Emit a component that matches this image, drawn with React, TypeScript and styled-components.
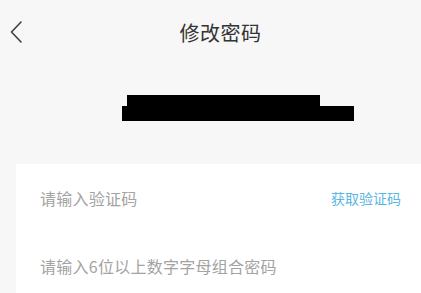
import styled, { createGlobalStyle } from "styled-components";

const GlobalStyle = createGlobalStyle`
    html, body {
        margin: 0;
        padding: 0;
        background: #f7f7f7;
        font-family: "Noto Sans CJK SC", "Noto Sans", sans-serif;
    }
`;

const Page = styled.div`
    width: 421px;
    min-height: 293px;
    overflow: hidden;
`;

const Header = styled.div`
    position: relative;
    height: 64px;
    display: flex;
    align-items: center;
    justify-content: center;
`;

const BackButton = styled.div`
    position: absolute;
    left: 10px;
    top: 21px;
    width: 12px;
    height: 22px;
    display: flex;
`;

const Title = styled.div`
    font-size: 20px;
    color: #333333;
    letter-spacing: 0.5px;
    margin-left: 20px;
`;

const Masked = styled.div`
    height: 100px;
    display: flex;
    flex-direction: column;
    padding-top: 31px;
    box-sizing: border-box;
`;

const MaskBar = styled.div<{ $left: number; $width: number; $height: number }>`
    margin-left: ${p => p.$left}px;
    width: ${p => p.$width}px;
    height: ${p => p.$height}px;
    background: #000;
`;

const Card = styled.div`
    margin-left: 16px;
    background: #ffffff;
`;

const Row = styled.div`
    height: 68px;
    display: flex;
    align-items: center;
    justify-content: space-between;
    padding: 0 20px 0 24px;
`;

const Placeholder = styled.span`
    font-size: 16px;
    letter-spacing: 0.25px;
    color: #a3a3a3;
`;

const CodeLink = styled.span`
    font-size: 14px;
    color: #5ab6e2;
    margin-top: -1px;
`;

export default function App() {
    return (
        <Page>
            <GlobalStyle />
            <Header>
                <BackButton>
                    <svg width="12" height="22" viewBox="0 0 12 22" fill="none">
                        <path d="M11 1 L1.5 11 L11 21" stroke="#3a3a3a" strokeWidth="1.5" strokeLinecap="round" strokeLinejoin="round" />
                    </svg>
                </BackButton>
                <Title>修改密码</Title>
            </Header>
            <Masked>
                <MaskBar $left={127} $width={193} $height={11} />
                <MaskBar $left={122} $width={232} $height={15} />
            </Masked>
            <Card>
                <Row>
                    <Placeholder>请输入验证码</Placeholder>
                    <CodeLink>获取验证码</CodeLink>
                </Row>
                <Row>
                    <Placeholder>请输入6位以上数字字母组合密码</Placeholder>
                </Row>
            </Card>
        </Page>
    );
}
